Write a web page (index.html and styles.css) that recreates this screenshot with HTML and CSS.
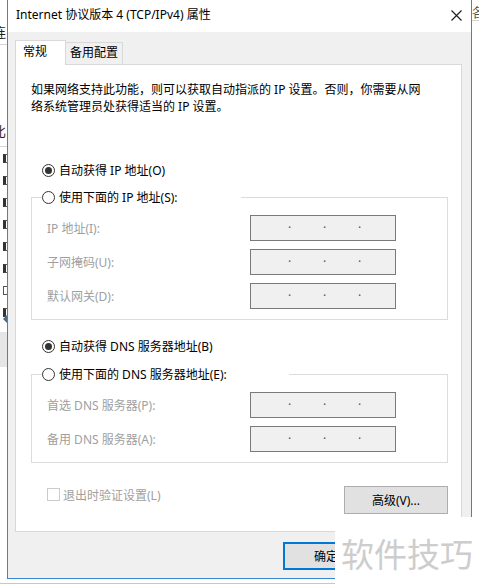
FILE: index.html
```html
<!DOCTYPE html>
<html lang="zh-CN">
<head>
<meta charset="utf-8">
<title>Internet 协议版本 4 (TCP/IPv4) 属性</title>
<link rel="stylesheet" href="styles.css">
</head>
<body>
<div class="desk">
  <div class="parent">
    <span class="pchar pc1">连</span>
    <span class="pline pl1"></span>
    <span class="pchar pc2">比</span>
    <span class="pline pl2"></span>
    <div class="pchecks">
      <span class="pcb on"></span><span class="pcb on"></span><span class="pcb on"></span><span class="pcb on"></span>
      <span class="pcb on"></span><span class="pcb on"></span><span class="pcb"></span><span class="pcb on"></span>
    </div>
    <span class="parrow"></span>
    <span class="pband"></span>
    <span class="pchar pc3">各</span>
    <span class="pline pl3"></span>
    <span class="pline pl4"></span>
  </div>

  <div class="dialog">
    <div class="titlebar">
      <span class="title">Internet 协议版本 4 (TCP/IPv4) 属性</span>
      <span class="close"><svg width="11" height="11" viewBox="0 0 11 11"><path d="M0.5 0.5 L10.5 10.5 M10.5 0.5 L0.5 10.5" stroke="#1a1a1a" stroke-width="1.1" fill="none"/></svg></span>
    </div>
    <div class="body">
      <div class="tabs">
        <div class="tab sel">常规</div>
        <div class="tab">备用配置</div>
      </div>
      <div class="panel">
        <p class="desc">如果网络支持此功能，则可以获取自动指派的 IP 设置。否则，你需要从网<br>络系统管理员处获得适当的 IP 设置。</p>

        <div class="radio-row r1"><span class="radio checked"></span><span>自动获得 IP 地址(O)</span></div>
        <div class="group g1">
          <div class="legend lw1"><span class="radio"></span><span>使用下面的 IP 地址(S):</span></div>
          <div class="field first"><span class="flabel">IP 地址(I):</span><span class="ipbox"><span class="dot">·</span><span class="dot">·</span><span class="dot">·</span></span></div>
          <div class="field"><span class="flabel">子网掩码(U):</span><span class="ipbox"><span class="dot">·</span><span class="dot">·</span><span class="dot">·</span></span></div>
          <div class="field"><span class="flabel">默认网关(D):</span><span class="ipbox"><span class="dot">·</span><span class="dot">·</span><span class="dot">·</span></span></div>
        </div>

        <div class="radio-row r3"><span class="radio checked"></span><span>自动获得 DNS 服务器地址(B)</span></div>
        <div class="group g2">
          <div class="legend lw2"><span class="radio"></span><span>使用下面的 DNS 服务器地址(E):</span></div>
          <div class="field first"><span class="flabel">首选 DNS 服务器(P):</span><span class="ipbox"><span class="dot">·</span><span class="dot">·</span><span class="dot">·</span></span></div>
          <div class="field"><span class="flabel">备用 DNS 服务器(A):</span><span class="ipbox"><span class="dot">·</span><span class="dot">·</span><span class="dot">·</span></span></div>
        </div>

        <div class="foot">
          <div class="check"><span class="cbox"></span><span>退出时验证设置(L)</span></div>
          <button class="btn adv">高级(V)...</button>
        </div>
      </div>
      <div class="actions">
        <button class="btn ok">确定</button>
      </div>
    </div>
  </div>

  <div class="watermark">软件技巧</div>
</div>
</body>
</html>
```

FILE: styles.css
```css
html, body {
  margin: 0;
  padding: 0;
  background: #fff;
}

.desk {
  position: relative;
  width: 479px;
  height: 588px;
  overflow: hidden;
  background: #fff;
  font-family: "Noto Sans", "Noto Sans CJK SC", sans-serif;
  font-size: 12px;
  color: #000;
}

/* background window (behind the dialog) */
.parent {
  position: absolute;
  inset: 0;
}
.pchar {
  position: absolute;
  font-family: "Noto Sans CJK SC", sans-serif;
  font-size: 13px;
  line-height: 16px;
  color: #222;
}
.pc1 { left: -7px; top: 24px; }
.pc2 { left: -7px; top: 123px; }
.pc3 { left: 472px; top: 4px; color: #555; }
.pline {
  position: absolute;
  height: 1px;
  background: #d4d4d4;
}
.pl1 { left: 0; top: 44px; width: 7px; }
.pl2 { left: 0; top: 146px; width: 7px; }
.pl3 { left: 472px; top: 20px; width: 7px; }
.pl4 { left: 0; top: 583px; width: 479px; background: #c8c8c8; }
.pchecks {
  position: absolute;
  left: 3px;
  top: 154px;
  display: flex;
  flex-direction: column;
  gap: 13px;
}
.pcb {
  display: block;
  width: 9px;
  height: 9px;
  box-sizing: border-box;
  border: 1px solid #555;
  background: #fff;
}
.pcb.on {
  border-left: 3px solid #333;
}
.parrow {
  position: absolute;
  left: 3px;
  top: 315px;
  width: 0;
  height: 0;
  border-top: 4px solid transparent;
  border-bottom: 4px solid transparent;
  border-right: 4px solid #4a6a8a;
}
.pband {
  position: absolute;
  left: 0;
  top: 332px;
  width: 7px;
  height: 35px;
  background: #e6e6e6;
}

/* dialog window */
.dialog {
  position: absolute;
  left: 7px;
  top: 0;
  width: 465px;
  height: 579px;
  box-sizing: border-box;
  border: 1px solid #3b86d0;
  border-top: none;
  background: #f0f0f0;
  display: flex;
  flex-direction: column;
}

.titlebar {
  height: 32px;
  flex: none;
  background: #fff;
  display: flex;
  justify-content: space-between;
  align-items: flex-start;
  padding-left: 8px;
}
.title {
  line-height: 30px;
  white-space: nowrap;
}
.close {
  display: flex;
  margin-top: 10px;
  margin-right: 9px;
}

.body {
  flex: 1;
  padding: 8px 0 0 7px;
}

.tabs {
  display: flex;
  align-items: flex-end;
  height: 24px;
}
.tab {
  box-sizing: border-box;
  height: 22px;
  width: 57px;
  padding-left: 4px;
  line-height: 20px;
  background: #f0f0f0;
  border: 1px solid #d9d9d9;
  border-left: none;
  border-bottom: none;
  white-space: nowrap;
}
.tab.sel {
  position: relative;
  z-index: 1;
  height: 25px;
  width: 51px;
  margin-bottom: -1px;
  padding-left: 7px;
  line-height: 22px;
  background: #fff;
  border-left: 1px solid #d9d9d9;
}

.panel {
  box-sizing: border-box;
  width: 447px;
  height: 468px;
  background: #fff;
  border: 1px solid #d9d9d9;
}

.desc {
  margin: 0;
  padding: 16px 0 0 15px;
  line-height: 17px;
  white-space: nowrap;
}

.radio-row,
.legend {
  display: flex;
  align-items: center;
  gap: 4px;
  height: 18px;
  white-space: nowrap;
}
.radio-row { margin-left: 26px; }
.r1 { margin-top: 46px; }
.r3 { margin-top: 17px; }

.radio {
  box-sizing: border-box;
  width: 13px;
  height: 13px;
  border: 1px solid #333;
  border-radius: 50%;
  background: #fff;
  display: flex;
  align-items: center;
  justify-content: center;
  flex: none;
}
.radio.checked::after {
  content: "";
  width: 7px;
  height: 7px;
  border-radius: 50%;
  background: #333;
}

.group {
  margin: 18px 13px 0 15px;
  border: 1px solid #dcdcdc;
  padding: 0 0 10px 0;
}
.g2 { margin-top: 19px; }
.legend {
  margin: -10px 0 0 10px;
  background: #fff;
}
.lw1 { width: 199px; }
.lw2 { width: 247px; }

.field {
  display: grid;
  grid-template-columns: 203px 146px;
  align-items: center;
  padding-left: 15px;
  margin-top: 8px;
}
.field.first { margin-top: 9px; }
.flabel {
  color: #a0a0a0;
  white-space: nowrap;
}
.ipbox {
  box-sizing: border-box;
  height: 26px;
  border: 1px solid #7a7a7a;
  background: #f0f0f0;
  display: flex;
  align-items: center;
  padding-left: 37px;
  line-height: 24px;
}
.dot {
  width: 35px;
  color: #555;
  font-size: 12px;
}

.foot {
  display: flex;
  align-items: flex-start;
  margin: 23px 13px 0 31px;
}
.check {
  display: flex;
  align-items: center;
  gap: 3px;
  height: 17px;
  color: #a0a0a0;
  white-space: nowrap;
}
.cbox {
  box-sizing: border-box;
  width: 13px;
  height: 13px;
  border: 1px solid #cccccc;
  background: #fff;
}

.btn {
  box-sizing: border-box;
  height: 28px;
  border: 1px solid #adadad;
  background: #e1e1e1;
  font-family: "Noto Sans", "Noto Sans CJK SC", sans-serif;
  font-size: 12px;
  color: #000;
  padding: 0;
}
.adv {
  margin-left: auto;
  width: 104px;
}

.actions {
  display: flex;
  gap: 8px;
  margin: 10px 0 0 268px;
}
.actions .btn { width: 86px; }
.btn.ok { border: 2px solid #0078d7; }

.watermark {
  position: absolute;
  left: 335px;
  top: 517px;
  width: 144px;
  height: 71px;
  background: #fff;
  display: flex;
  align-items: center;
  justify-content: center;
  font-family: "Noto Sans CJK SC", sans-serif;
  font-size: 33px;
  color: #cdcdcd;
  white-space: nowrap;
}
```
